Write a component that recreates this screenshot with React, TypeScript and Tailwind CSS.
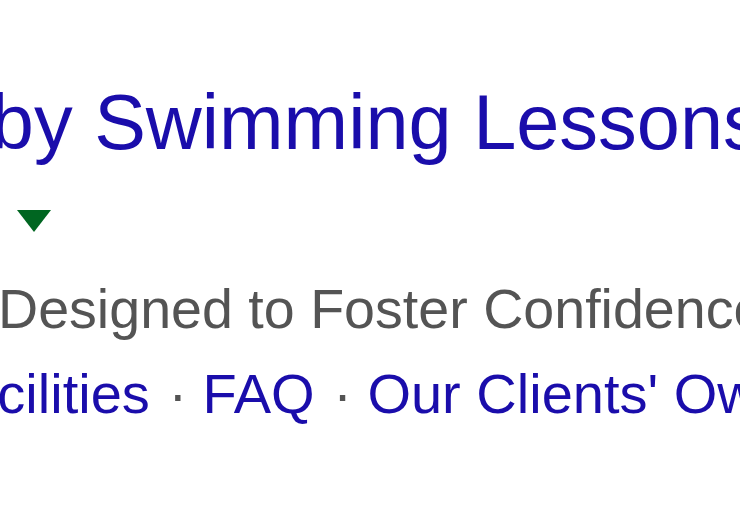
const sitelinks = ["Facilities", "FAQ", "Our Clients' Own Words"];

export default function App() {
  return (
    <div className="h-[520px] w-[740px] overflow-hidden bg-white font-['Liberation_Sans',Arial,sans-serif]">
      <div className="flex flex-col whitespace-nowrap">
        <a
          href="#"
          className="ml-[-104px] mt-[84px] text-[77.5px] leading-none text-[#1a0dab]"
        >
          Baby Swimming Lessons for Infants
        </a>
        <div className="ml-[17px] mt-[48px] h-0 w-0 border-x-[17.5px] border-t-[22px] border-x-transparent border-t-[#006621]" />
        <p className="ml-[-2px] mt-[50px] text-[55.6px] leading-none text-[#545454]">
          Designed to Foster Confidence in the Water
        </p>
        <div className="ml-[-68px] mt-[29px] text-[56px] leading-none text-[#1a0dab]">
          {sitelinks.map((link, i) => (
            <span key={link}>
              {i > 0 && <span className="pl-[3px] text-[#545454]"> · </span>}
              <a href="#">{link}</a>
            </span>
          ))}
        </div>
      </div>
    </div>
  );
}
